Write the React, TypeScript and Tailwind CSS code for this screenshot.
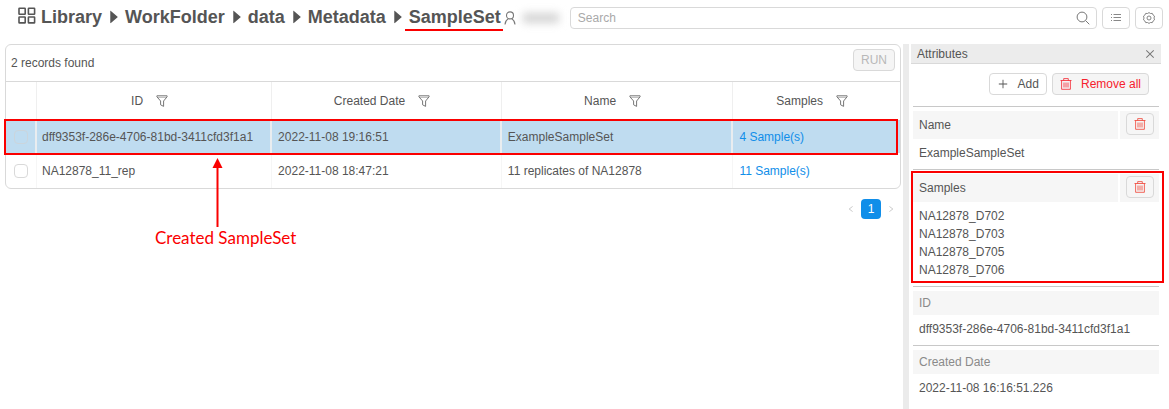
import { Fragment } from "react";
import {
  AiFillCaretRight,
  AiOutlineClose,
  AiOutlineLeft,
  AiOutlinePlus,
  AiOutlineRight,
} from "react-icons/ai";

const crumbs = ["Library", "WorkFolder", "data", "Metadata", "SampleSet"];
const columns = ["ID", "Created Date", "Name", "Samples"];

const rows = [
  {
    id: "dff9353f-286e-4706-81bd-3411cfd3f1a1",
    created: "2022-11-08 19:16:51",
    name: "ExampleSampleSet",
    samples: "4 Sample(s)",
    selected: true,
  },
  {
    id: "NA12878_11_rep",
    created: "2022-11-08 18:47:21",
    name: "11 replicates of NA12878",
    samples: "11 Sample(s)",
    selected: false,
  },
];

type Attribute = { label: string; values: string[]; removable?: boolean; marked?: boolean };

const attributes: Attribute[] = [
  { label: "Name", values: ["ExampleSampleSet"], removable: true },
  {
    label: "Samples",
    values: ["NA12878_D702", "NA12878_D703", "NA12878_D705", "NA12878_D706"],
    removable: true,
    marked: true,
  },
  { label: "ID", values: ["dff9353f-286e-4706-81bd-3411cfd3f1a1"] },
  { label: "Created Date", values: ["2022-11-08 16:16:51.226"] },
];

const button = "flex h-[22px] items-center justify-center rounded border border-[#d9d9d9]";

function GridIcon() {
  return (
    <svg width="18" height="18" viewBox="0 0 18 18" className="mr-[5px] -mt-[2px]" fill="none" stroke="#555" strokeWidth="1.6">
      <rect x="1" y="1.3" width="6.2" height="5.9" rx="0.5" />
      <rect x="10.4" y="1.3" width="6.2" height="5.9" rx="0.5" />
      <rect x="1" y="10" width="6.2" height="5.9" rx="0.5" />
      <rect x="10.4" y="10" width="6.2" height="5.9" rx="0.5" />
    </svg>
  );
}

function UserIcon() {
  return (
    <svg width="12" height="14" viewBox="0 0 12 14" fill="none" stroke="#777" strokeWidth="1.1">
      <circle cx="6" cy="4.4" r="3.5" />
      <path d="M1 13.5 C1.2 10.6 2.6 8.7 4.4 7.6 M7.6 7.6 C9.4 8.7 10.8 10.6 11 13.5" />
    </svg>
  );
}

function SearchIcon() {
  return (
    <svg width="14" height="14" viewBox="0 0 14 14" fill="none" stroke="#777" strokeWidth="1">
      <circle cx="6" cy="6" r="4.9" />
      <path d="M9.6 9.6 L13.3 13.3" />
    </svg>
  );
}

function ListIcon() {
  return (
    <svg width="12" height="12" viewBox="0 0 12 12" fill="none" stroke="#888">
      <path d="M3.5 2.5 H11 M3.5 5.5 H11 M3.5 8.5 H11" />
      <path d="M1 2.5 H2 M1 5.5 H2 M1 8.5 H2" />
    </svg>
  );
}

function SettingIcon() {
  return (
    <svg width="12" height="12" viewBox="0 0 12 12" fill="none" stroke="#777" strokeWidth="0.9">
      <path d="M6 0.6 L7.5 1.5 L9.3 1.4 L10.1 3 L11.5 4.1 L11 6 L11.5 7.9 L10.1 9 L9.3 10.6 L7.5 10.5 L6 11.4 L4.5 10.5 L2.7 10.6 L1.9 9 L0.5 7.9 L1 6 L0.5 4.1 L1.9 3 L2.7 1.4 L4.5 1.5 Z" />
      <circle cx="6" cy="6" r="2" />
    </svg>
  );
}

function FilterIcon() {
  return (
    <svg width="12" height="12" viewBox="0 0 12 12" fill="none" stroke="#777" strokeWidth="1">
      <path d="M0.9 0.8 H11.1 V1.8 L7.6 6 V11.4 L4.6 9.8 V6 L0.9 1.8 Z" />
      <path d="M1.4 2.4 H10.6" strokeWidth="0.5" />
    </svg>
  );
}

function TrashIcon() {
  return (
    <svg width="12" height="12" viewBox="0 0 12 12" fill="none" stroke="currentColor" strokeWidth="0.8">
      <path d="M0.5 2.5 H11.5 M3.7 2.5 V0.6 H8.3 V2.5 M1.6 2.5 V11.3 H10.4 V2.5 M4 4.5 V9.5 M6 4.5 V9.5 M8 4.5 V9.5" />
    </svg>
  );
}

function Header() {
  return (
    <header className="flex h-11 items-start pr-[6px] pl-[18px]">
      <nav aria-label="Breadcrumb" className="flex h-[34px] items-center text-lg font-bold whitespace-nowrap">
        <GridIcon />
        {crumbs.map((crumb, i) => (
          <Fragment key={crumb}>
            {i > 0 && <AiFillCaretRight className="mr-[2px] ml-[3px] size-[18px]" />}
            <a href="#" className="relative">
              {crumb}
              {i === crumbs.length - 1 && (
                <span className="absolute -right-[2px] bottom-0 -left-1 h-[2px] bg-[#fa0000]" />
              )}
            </a>
          </Fragment>
        ))}
      </nav>
      <div className="flex h-9 w-[69px] shrink-0 items-center gap-[7px] pl-[3px]">
        <UserIcon />
        <span className="h-[10px] w-[36px] bg-[#d4d4d4] blur-[4px]" />
      </div>
      <div className="mt-[7px] flex min-w-0 flex-1 gap-[5px]">
        <label className="flex h-[22px] min-w-0 flex-1 items-center rounded border border-[#d9d9d9] pr-[6px] pl-[7px]">
          <input
            aria-label="Search"
            placeholder="Search"
            className="min-w-0 flex-1 outline-none placeholder:text-[#a9a9a9]"
          />
          <SearchIcon />
        </label>
        <button aria-label="View as list" className={`${button} w-7`}>
          <ListIcon />
        </button>
        <button aria-label="Settings" className={`${button} w-7`}>
          <SettingIcon />
        </button>
      </div>
    </header>
  );
}

function Records() {
  return (
    <main className="relative min-w-0 flex-1 pr-[2px] pl-[5px]">
      <section className="rounded-md border border-[#d9d9d9]">
        <div className="flex h-9 items-center justify-between pr-[5px] pl-[5px]">
          <span>2 records found</span>
          <button disabled className={`${button} mb-[6px] w-[42px] bg-[#f5f5f5] text-[#b8b8b8]`}>
            RUN
          </button>
        </div>
        <table className="w-full table-fixed border-separate border-spacing-0 border-t border-[#d9d9d9]">
          <colgroup>
            <col className="w-[31px]" />
            <col className="w-[26.3%]" />
            <col className="w-[25.7%]" />
            <col className="w-[25.9%]" />
            <col />
          </colgroup>
          <thead>
            <tr className="h-[38px]">
              <th aria-label="Select" className="border-r border-[#efefef]" />
              {columns.map((c) => (
                <th key={c} className="border-r border-[#efefef] pr-[9px] font-normal last:border-r-0">
                  <span className="flex items-center justify-center gap-[13px]">
                    {c}
                    <button aria-label={`Filter by ${c}`}>
                      <FilterIcon />
                    </button>
                  </span>
                </th>
              ))}
            </tr>
          </thead>
          <tbody>
            {rows.map((r) => {
              const border = r.selected ? "border-r-2 border-[#e9edf0]" : "border-r border-[#f6f6f6]";
              return (
                <tr key={r.id} className={r.selected ? "h-[33px] bg-[#bfdcf0]" : "h-[35px]"}>
                  <td className={border}>
                    <input
                      type="checkbox"
                      aria-label={`Select ${r.id}`}
                      className={`mx-auto block size-[14px] appearance-none rounded-sm border ${
                        r.selected ? "border-[#cbd5dc]" : "border-[#d9d9d9]"
                      }`}
                    />
                  </td>
                  <td className={`${border} pl-[5px]`}>{r.id}</td>
                  <td className={`${border} pl-[6px]`}>{r.created}</td>
                  <td className={`${border} pl-[6px]`}>{r.name}</td>
                  <td className="pl-[6px]">
                    <a href="#" className="text-[#108ee9]">
                      {r.samples}
                    </a>
                  </td>
                </tr>
              );
            })}
          </tbody>
        </table>
      </section>

      <nav aria-label="Pages" className="mt-[10px] flex items-center justify-end gap-[6px] pr-[6px]">
        <button disabled aria-label="Previous page" className="text-[#c0c0c0]">
          <AiOutlineLeft className="size-2" />
        </button>
        <button aria-current="page" className="size-5 rounded bg-[#108ee9] text-white">
          1
        </button>
        <button disabled aria-label="Next page" className="text-[#c0c0c0]">
          <AiOutlineRight className="size-2" />
        </button>
      </nav>

      <div className="pointer-events-none absolute top-[75px] right-[5px] left-1 h-9 border-2 border-[#fa0000]" />
      <div className="pointer-events-none absolute top-[114px] left-[155px] flex flex-col text-[#fa0000]">
        <svg width="12" height="70" viewBox="0 0 12 70" className="ml-[57px]" fill="currentColor">
          <path d="M5.5 0 L10.5 10 H0.5 Z" />
          <rect x="4.5" y="9" width="2" height="60" />
        </svg>
        <span className="font-[Lato,sans-serif] text-[17px] leading-5 whitespace-nowrap">Created SampleSet</span>
      </div>
    </main>
  );
}

function TrashButton({ label }: { label: string }) {
  return (
    <button aria-label={`Remove ${label}`} className={`${button} mb-[2px] w-7 text-[#f04134]`}>
      <TrashIcon />
    </button>
  );
}

function Attributes() {
  return (
    <aside className="w-[258px] shrink-0 pr-[8px]">
      <h2 className="flex h-5 items-center justify-between border-b border-[#d9d9d9] bg-[#ececec] pr-[5px] pl-[6px]">
        Attributes
        <button aria-label="Close attributes" className="text-[#777]">
          <AiOutlineClose className="size-3" />
        </button>
      </h2>
      <div className="flex justify-end gap-[5px] pt-[9px] pr-3 pb-[11px]">
        <button className={`${button} gap-[9px] px-[7px]`}>
          <AiOutlinePlus className="size-3" />
          Add
        </button>
        <button className={`${button} gap-[9px] bg-[#f5f5f5] px-[7px] text-[#f5222d]`}>
          <TrashIcon />
          Remove all
        </button>
      </div>
      <dl className="mr-[2px] ml-[2px]">
        {attributes.map((a) => (
          <div key={a.label} className="relative border-t border-[#c8c8c8] pt-1">
            <dt className={`flex gap-[2px] ${a.removable ? "h-7" : "h-6 text-[#8a8a8a]"}`}>
              <span className="flex flex-1 items-center bg-[#f6f6f6] pl-[6px]">{a.label}</span>
              {a.removable && (
                <span className="flex w-[39px] items-center justify-center bg-[#f6f6f6]">
                  <TrashButton label={a.label} />
                </span>
              )}
            </dt>
            <dd className="pt-[5px] pb-[7px] pl-[6px]">
              {a.values.map((v) => (
                <div key={v}>{v}</div>
              ))}
            </dd>
            {a.marked && (
              <div className="pointer-events-none absolute top-[1px] -right-[5px] bottom-[3px] -left-[2px] border-2 border-[#fa0000]" />
            )}
          </div>
        ))}
      </dl>
    </aside>
  );
}

export default function App() {
  return (
    <div className="flex min-h-screen flex-col bg-white font-['Liberation_Sans',Arial,sans-serif] text-xs leading-[18px] text-[#555]">
      <Header />
      <div className="flex flex-1">
        <Records />
        <div className="mr-[2px] w-[6px] shrink-0 bg-[#ebebeb]" />
        <Attributes />
      </div>
    </div>
  );
}
